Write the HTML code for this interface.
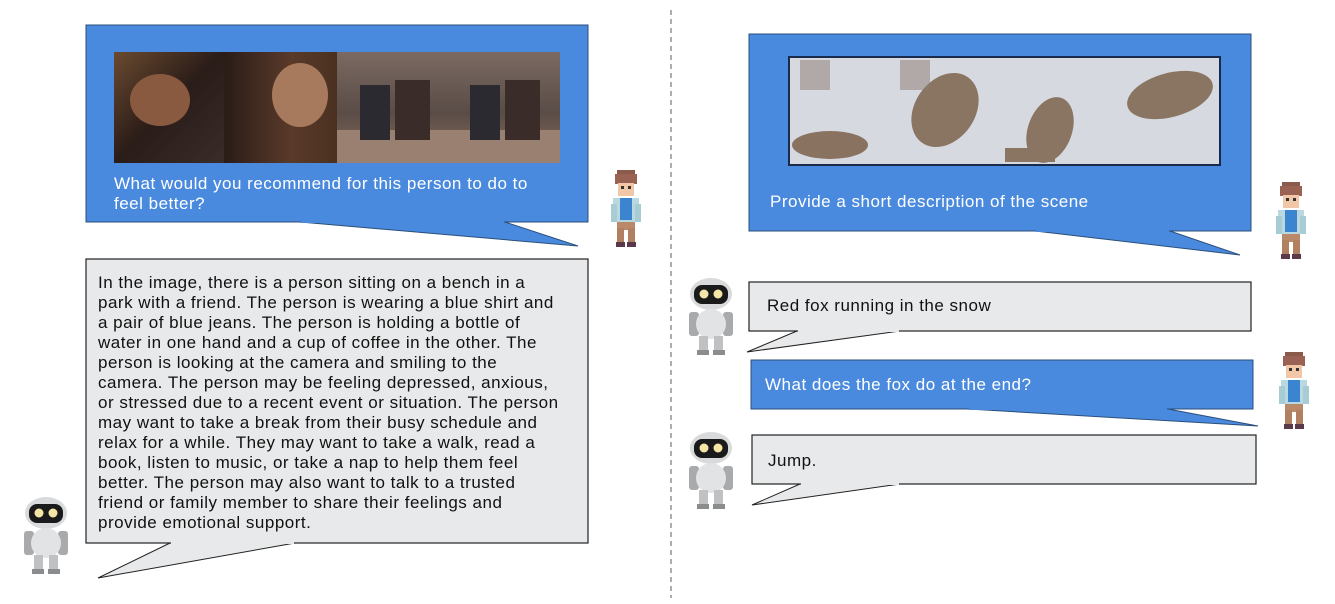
<!DOCTYPE html>
<html><head><meta charset="utf-8"><style>
html,body{margin:0;padding:0;background:#fff;}
svg{display:block;}
text{font-family:"Liberation Sans",sans-serif;font-size:17px;letter-spacing:0.5px;}
</style></head><body>
<svg width="1335" height="604" viewBox="0 0 1335 604" xmlns="http://www.w3.org/2000/svg">
<defs>
<g id="person">
  <rect x="9" y="2" width="18" height="6" fill="#8a5a4a"/>
  <rect x="7" y="6" width="22" height="10" fill="#9a6252"/>
  <rect x="10" y="12" width="16" height="16" fill="#f2c7a8"/>
  <rect x="10" y="10" width="16" height="5" fill="#9a6252"/>
  <rect x="13" y="18" width="3" height="3" fill="#333"/>
  <rect x="20" y="18" width="3" height="3" fill="#333"/>
  <rect x="5" y="30" width="26" height="24" fill="#b9d8e0"/>
  <rect x="12" y="30" width="12" height="22" fill="#3b84d0"/>
  <rect x="3" y="36" width="6" height="18" fill="#a8ccd4"/>
  <rect x="27" y="36" width="6" height="18" fill="#a8ccd4"/>
  <rect x="9" y="54" width="18" height="8" fill="#b88a6a"/>
  <rect x="9" y="60" width="7" height="16" fill="#b08060"/>
  <rect x="20" y="60" width="7" height="16" fill="#b08060"/>
  <rect x="8" y="74" width="9" height="5" fill="#5a3a4a"/>
  <rect x="19" y="74" width="9" height="5" fill="#5a3a4a"/>
</g>
<g id="robot">
  <ellipse cx="28" cy="16" rx="21" ry="16" fill="#d8dadc"/>
  <rect x="11" y="7" width="34" height="19" rx="8" fill="#1a1a1a"/>
  <circle cx="21" cy="16" r="4.5" fill="#f5e6a8"/>
  <circle cx="35" cy="16" r="4.5" fill="#f5e6a8"/>
  <rect x="6" y="34" width="10" height="24" rx="3" fill="#a8aaac"/>
  <rect x="40" y="34" width="10" height="24" rx="3" fill="#a8aaac"/>
  <ellipse cx="28" cy="46" rx="15" ry="15" fill="#e2e3e5"/>
  <rect x="16" y="58" width="9" height="16" fill="#bfc1c3"/>
  <rect x="31" y="58" width="9" height="16" fill="#bfc1c3"/>
  <rect x="14" y="72" width="12" height="5" fill="#8a8c8e"/>
  <rect x="30" y="72" width="12" height="5" fill="#8a8c8e"/>
</g>
<linearGradient id="p1" x1="0" x2="1" y1="0" y2="1"><stop offset="0" stop-color="#6a4a30"/><stop offset=".5" stop-color="#2a1c18"/><stop offset="1" stop-color="#3a2c28"/></linearGradient>
<linearGradient id="p2" x1="0" x2="1"><stop offset="0" stop-color="#2a1c18"/><stop offset=".6" stop-color="#5a3a2a"/><stop offset="1" stop-color="#4a3020"/></linearGradient>
<linearGradient id="p3" x1="0" x2="0" y1="0" y2="1"><stop offset="0" stop-color="#7a6a62"/><stop offset=".55" stop-color="#5a4c46"/><stop offset="1" stop-color="#8a7060"/></linearGradient>
</defs>

<line x1="671" y1="10" x2="671" y2="598" stroke="#777" stroke-width="1.2" stroke-dasharray="5,4"/>

<polygon points="300,222 578,246 505,222" fill="#4a8ade" stroke="#2a4f7a" stroke-width="1"/>
<rect x="86" y="25" width="502" height="197" fill="#4a8ade" stroke="#2a4f7a" stroke-width="1"/>
<line x1="301" y1="222" x2="504" y2="222" stroke="#4a8ade" stroke-width="2"/>
<rect x="114" y="52" width="110" height="111" fill="url(#p1)"/>
<rect x="224" y="52" width="113" height="111" fill="url(#p2)"/>
<ellipse cx="300" cy="95" rx="28" ry="32" fill="#a77a5e"/>
<ellipse cx="160" cy="100" rx="30" ry="26" fill="#8a5a40"/>
<rect x="337" y="52" width="223" height="111" fill="url(#p3)"/>
<rect x="337" y="130" width="223" height="33" fill="#9a8070"/>
<rect x="360" y="85" width="30" height="55" fill="#2a2a30"/>
<rect x="395" y="80" width="35" height="60" fill="#3a2c28"/>
<rect x="470" y="85" width="30" height="55" fill="#2a2a30"/>
<rect x="505" y="80" width="35" height="60" fill="#3a2c28"/>
<text x="114" y="189" fill="#fff">What would you recommend for this person to do to</text>
<text x="114" y="209" fill="#fff">feel better?</text>

<use href="#person" x="608" y="168"/>

<polygon points="170,543 98,578 295,543" fill="#e8e9ea" stroke="#222" stroke-width="1"/>
<rect x="86" y="259" width="502" height="284" fill="#e8e9ea" stroke="#222" stroke-width="1.2"/>
<line x1="171" y1="543" x2="294" y2="543" stroke="#e8e9ea" stroke-width="2"/>
<g fill="#111">
<text x="98" y="288">In the image, there is a person sitting on a bench in a</text>
<text x="98" y="308">park with a friend. The person is wearing a blue shirt and</text>
<text x="98" y="328">a pair of blue jeans. The person is holding a bottle of</text>
<text x="98" y="348">water in one hand and a cup of coffee in the other. The</text>
<text x="98" y="368">person is looking at the camera and smiling to the</text>
<text x="98" y="388">camera. The person may be feeling depressed, anxious,</text>
<text x="98" y="408">or stressed due to a recent event or situation. The person</text>
<text x="98" y="428">may want to take a break from their busy schedule and</text>
<text x="98" y="448">relax for a while. They may want to take a walk, read a</text>
<text x="98" y="468">book, listen to music, or take a nap to help them feel</text>
<text x="98" y="488">better. The person may also want to talk to a trusted</text>
<text x="98" y="508">friend or family member to share their feelings and</text>
<text x="98" y="528">provide emotional support.</text>
</g>
<use href="#robot" x="18" y="497"/>

<polygon points="1035,231 1240,255 1170,231" fill="#4a8ade" stroke="#2a4f7a" stroke-width="1"/>
<rect x="749" y="34" width="502" height="197" fill="#4a8ade" stroke="#2a4f7a" stroke-width="1"/>
<line x1="1036" y1="231" x2="1169" y2="231" stroke="#4a8ade" stroke-width="2"/>
<rect x="789" y="57" width="431" height="108" fill="#d6d9e0" stroke="#1a2a4a" stroke-width="2"/>
<ellipse cx="830" cy="145" rx="38" ry="14" fill="#8a7260"/>
<ellipse cx="945" cy="110" rx="30" ry="40" fill="#8a7462" transform="rotate(35 945 110)"/>
<ellipse cx="1050" cy="130" rx="22" ry="34" fill="#8a7462" transform="rotate(20 1050 130)"/>
<rect x="1005" y="148" width="50" height="14" fill="#8a7462"/>
<ellipse cx="1170" cy="95" rx="44" ry="22" fill="#8a7462" transform="rotate(-15 1170 95)"/>
<rect x="800" y="60" width="30" height="30" fill="#8a7a70" opacity=".5"/>
<rect x="900" y="60" width="30" height="30" fill="#8a7a70" opacity=".5"/>
<text x="770" y="207" fill="#fff">Provide a short description of the scene</text>
<use href="#person" x="1273" y="180"/>

<polygon points="797,331 747,352 900,331" fill="#e8e9ea" stroke="#222" stroke-width="1"/>
<rect x="749" y="282" width="502" height="49" fill="#e8e9ea" stroke="#222" stroke-width="1.2"/>
<line x1="798" y1="331" x2="899" y2="331" stroke="#e8e9ea" stroke-width="2"/>
<text x="767" y="311" fill="#111">Red fox running in the snow</text>
<use href="#robot" x="683" y="278"/>

<polygon points="968,409 1258,426 1168,409" fill="#4a8ade" stroke="#2a4f7a" stroke-width="1"/>
<rect x="751" y="360" width="502" height="49" fill="#4a8ade" stroke="#2a4f7a" stroke-width="1"/>
<line x1="969" y1="409" x2="1167" y2="409" stroke="#4a8ade" stroke-width="2"/>
<text x="765" y="390" fill="#fff">What does the fox do at the end?</text>
<use href="#person" x="1276" y="350"/>

<polygon points="800,484 752,505 900,484" fill="#e8e9ea" stroke="#222" stroke-width="1"/>
<rect x="752" y="435" width="504" height="49" fill="#e8e9ea" stroke="#222" stroke-width="1.2"/>
<line x1="801" y1="484" x2="899" y2="484" stroke="#e8e9ea" stroke-width="2"/>
<text x="768" y="466" fill="#111">Jump.</text>
<use href="#robot" x="683" y="432"/>
</svg>
</body></html>
